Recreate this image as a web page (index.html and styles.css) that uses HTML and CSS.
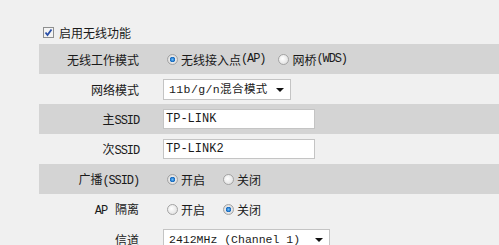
FILE: index.html
```html
<!DOCTYPE html>
<html lang="zh-CN">
<head>
    <meta charset="UTF-8">
    <meta name="viewport" content="width=device-width, initial-scale=1.0">
    <title>无线网络基本设置</title>
    <link rel="stylesheet" href="styles.css">
</head>
<body>
    <div class="panel">
        <label class="enable">
            <svg class="check" width="11" height="11" viewBox="0 0 11 11">
                <rect x="0.5" y="0.5" width="10" height="10" fill="#f4f4f4" stroke="#8e8f8f"/>
                <path d="M2.5 5.5 L4.5 8 L8.5 2.5" fill="none" stroke="#2a4fa8" stroke-width="1.8"/>
            </svg>
            启用无线功能
        </label>

        <div class="row dark">
            <span class="label">无线工作模式</span>
            <div class="value">
                <label class="opt gap-s"><input type="radio" name="mode" checked>无线接入点<span class="en">(AP)</span></label>
                <label class="opt"><input type="radio" name="mode">网桥<span class="en">(WDS)</span></label>
            </div>
        </div>

        <div class="row">
            <span class="label">网络模式</span>
            <div class="value">
                <span class="sel mode">
                    <select>
                        <option>11b/g/n混合模式</option>
                    </select>
                </span>
            </div>
        </div>

        <div class="row dark">
            <span class="label">主<span class="en">SSID</span></span>
            <div class="value"><input class="text" type="text" value="TP-LINK"></div>
        </div>

        <div class="row">
            <span class="label">次<span class="en">SSID</span></span>
            <div class="value"><input class="text" type="text" value="TP-LINK2"></div>
        </div>

        <div class="row dark">
            <span class="label">广播<span class="en">(SSID)</span></span>
            <div class="value">
                <label class="opt gap-l"><input type="radio" name="bcast" checked>开启</label>
                <label class="opt"><input type="radio" name="bcast">关闭</label>
            </div>
        </div>

        <div class="row">
            <span class="label"><span class="en ap">AP</span>隔离</span>
            <div class="value">
                <label class="opt gap-l"><input type="radio" name="iso">开启</label>
                <label class="opt"><input type="radio" name="iso" checked>关闭</label>
            </div>
        </div>

        <div class="row">
            <span class="label">信道</span>
            <div class="value">
                <span class="sel channel">
                    <select>
                        <option>2412MHz (Channel 1)</option>
                    </select>
                </span>
            </div>
        </div>
    </div>
</body>
</html>
```

FILE: styles.css
```css
body {
    margin: 0;
    background-color: #f0f0f0;
    color: #1a1a1a;
    font-family: "Noto Sans CJK SC", "Liberation Mono", monospace;
    font-size: 12px;
}
.panel {
    padding: 20px 0 0 39px;
}
.enable {
    display: flex;
    align-items: center;
    height: 24px;
    padding-left: 4px;
}
.check {
    margin-right: 5px;
}
.row {
    display: grid;
    grid-template-columns: 100px 1fr;
    column-gap: 24px;
    align-items: center;
    height: 30px;
}
.row.dark {
    background-color: #d4d4d4;
}
.label {
    text-align: right;
}
.en {
    font-family: "Liberation Mono", monospace;
    font-size: 12px;
    letter-spacing: -1.1px;
}
.en.ap {
    margin-right: 8px;
}
.value {
    display: flex;
    align-items: center;
}
.opt {
    display: flex;
    align-items: center;
    margin-left: 4px;
}
.opt.gap-s {
    margin-right: 9px;
}
.opt.gap-l {
    margin-right: 14px;
}
.opt input {
    appearance: none;
    width: 11px;
    height: 11px;
    margin: 0 3px 0 0;
    border: 1px solid #a3a3a3;
    border-radius: 50%;
    background: radial-gradient(circle at 40% 40%, #ffffff, #d9d9d9);
}
.opt input:checked {
    background: radial-gradient(circle, #6cc0ff 0, #1062b8 2.5px, #e8e8e8 3px, #d0d0d0 100%);
}
.sel {
    position: relative;
    display: inline-block;
}
.sel select {
    appearance: none;
    height: 21px;
    border: 1px solid #c4c4c4;
    background-color: #fff;
    color: #1a1a1a;
    font-family: "Liberation Mono", "Noto Sans CJK SC", monospace;
    padding: 0 0 0 5px;
    border-radius: 0;
}
.sel::after {
    content: '';
    position: absolute;
    right: 7px;
    top: 9px;
    border-left: 4px solid transparent;
    border-right: 4px solid transparent;
    border-top: 4px solid #111;
}
.mode select {
    width: 128px;
    font-size: 11.5px;
    letter-spacing: 0.4px;
}
.channel select {
    width: 167px;
    font-size: 11.5px;
}
.text {
    width: 152px;
    height: 20px;
    box-sizing: border-box;
    border: 1px solid #c4c4c4;
    padding: 0 2px;
    font-family: "Liberation Mono", monospace;
    font-size: 12px;
    color: #1a1a1a;
    outline: none;
}
```
